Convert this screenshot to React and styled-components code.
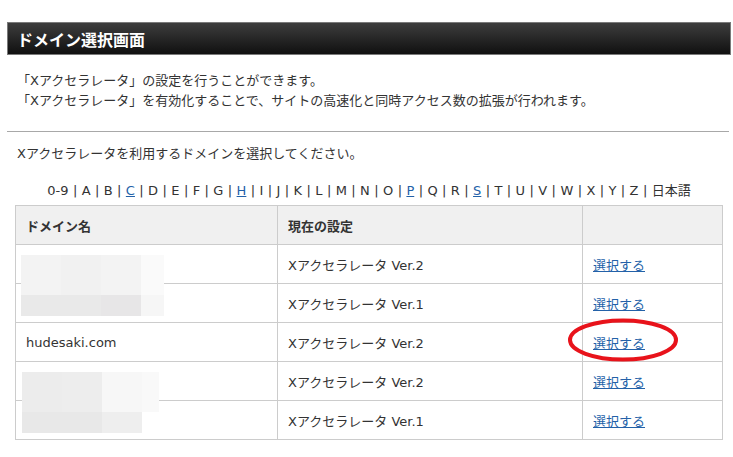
import React from "react";
import styled, { createGlobalStyle } from "styled-components";

const Global = createGlobalStyle`
  html, body { margin: 0; padding: 0; background: #fff; }
  body {
    font-family: "DejaVu Sans", "Noto Sans CJK JP", sans-serif;
    font-size: 13px;
    color: #333;
  }
`;

const Page = styled.div`
  width: 733px;
  height: 457px;
  overflow: hidden;
  padding-top: 22px;
  box-sizing: border-box;
`;

const TitleBar = styled.h1`
  margin: 0 2px 0 7px;
  height: 33px;
  box-sizing: border-box;
  border: 1px solid #7a7a7a;
  background: linear-gradient(#3d3d3d, #101010);
  color: #fff;
  font-size: 16px;
  font-weight: bold;
  display: flex;
  align-items: center;
  padding-left: 9px;
`;

const Intro = styled.div`
  padding: 16px 0 0 17px;
  line-height: 20px;
  height: 60px;
  box-sizing: border-box;
`;

const Line = styled.div`
  white-space: nowrap;
`;

const Rule = styled.hr`
  margin: 16px 4px 0 7px;
  border: 0;
  border-top: 1px solid #a8a8a8;
  height: 0;
`;

const Content = styled.div`
  padding: 12px 11px 0 15px;
`;

const Lead = styled.p`
  margin: 0 0 0 2px;
  line-height: 20px;
`;

const Letters = styled.div`
  margin-top: 17px;
  line-height: 20px;
  text-align: center;
  width: 708px;
  white-space: nowrap;
`;

const Sep = styled.span`
  margin: 0 4.4px;
`;

const LetterLink = styled.a`
  color: #2361a8;
  text-decoration: underline;
`;

const TableWrap = styled.div`
  position: relative;
  margin-top: 4px;
  width: 708px;
`;

const Table = styled.table`
  border-collapse: collapse;
  width: 707px;
  table-layout: fixed;
`;

const Th = styled.th`
  background: #f0f0f0;
  border: 1px solid #cccccc;
  height: 39px;
  padding: 0 0 0 10px;
  text-align: left;
  font-weight: bold;
  box-sizing: border-box;
`;

const Td = styled.td`
  border: 1px solid #cccccc;
  height: 39px;
  padding: 0 0 0 10px;
  box-sizing: border-box;
  white-space: nowrap;
`;

const SelectLink = styled.a`
  color: #2361a8;
  text-decoration: underline;
`;

const Mosaic = styled.div`
  position: absolute;
  left: ${(p) => p.$left}px;
  top: ${(p) => p.$top}px;
  display: grid;
  grid-template-columns: 40px 40px 40px ${(p) => p.$last}px;
  grid-template-rows: 40px 21px;
`;

const Tile = styled.div`
  background: ${(p) => p.$c};
`;

const Circle = styled.svg`
  position: absolute;
  left: 552px;
  top: 114px;
  overflow: visible;
`;

const letters = ["0-9","A","B","C","D","E","F","G","H","I","J","K","L","M","N","O","P","Q","R","S","T","U","V","W","X","Y","Z","日本語"];
const linked = new Set(["C","H","P","S"]);

const rows = [
  { name: "", ver: "Xアクセラレータ Ver.2" },
  { name: "", ver: "Xアクセラレータ Ver.1" },
  { name: "hudesaki.com", ver: "Xアクセラレータ Ver.2" },
  { name: "", ver: "Xアクセラレータ Ver.2" },
  { name: "", ver: "Xアクセラレータ Ver.1" },
];

const mosaic1 = ["#f3f3f3","#f1f1f1","#f3f3f3","#fafafa","#e9e9e9","#e9e9e9","#e7e6e7","#f6f6f6"];
const mosaic2 = ["#ececec","#ededed","#f7f7f7","#f9f9f9","#e8e8e8","#e8e8e8","#eeeeee","transparent"];

export default function App() {
  return (
    <Page>
      <Global />
      <TitleBar>ドメイン選択画面</TitleBar>
      <Intro>
        <Line>「Xアクセラレータ」の設定を行うことができます。</Line>
        <Line>「Xアクセラレータ」を有効化することで、サイトの高速化と同時アクセス数の拡張が行われます。</Line>
      </Intro>
      <Rule />
      <Content>
        <Lead>Xアクセラレータを利用するドメインを選択してください。</Lead>
        <Letters>
          {letters.map((l, i) => (
            <React.Fragment key={l}>
              {i > 0 && <Sep>|</Sep>}
              {linked.has(l) ? <LetterLink href="#">{l}</LetterLink> : <span>{l}</span>}
            </React.Fragment>
          ))}
        </Letters>
        <TableWrap>
          <Table>
            <colgroup>
              <col style={{ width: 262 }} />
              <col style={{ width: 305 }} />
              <col style={{ width: 140 }} />
            </colgroup>
            <thead>
              <tr>
                <Th>ドメイン名</Th>
                <Th>現在の設定</Th>
                <Th></Th>
              </tr>
            </thead>
            <tbody>
              {rows.map((r, i) => (
                <tr key={i}>
                  <Td>{r.name}</Td>
                  <Td>{r.ver}</Td>
                  <Td><SelectLink href="#">選択する</SelectLink></Td>
                </tr>
              ))}
            </tbody>
          </Table>
          <Mosaic $left={6} $top={50} $last={23}>
            {mosaic1.map((c, i) => <Tile key={i} $c={c} />)}
          </Mosaic>
          <Mosaic $left={7} $top={167} $last={17}>
            {mosaic2.map((c, i) => <Tile key={i} $c={c} />)}
          </Mosaic>
          <Circle width="112" height="44" viewBox="0 0 112 44">
            <ellipse cx="56" cy="21" rx="53" ry="19.5" fill="none" stroke="#e8131b" strokeWidth="4" />
          </Circle>
        </TableWrap>
      </Content>
    </Page>
  );
}
